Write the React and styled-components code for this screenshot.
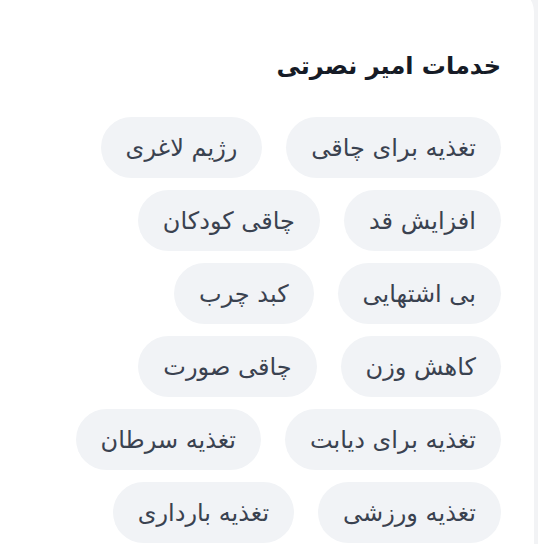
import React from 'react';
import styled, { createGlobalStyle } from 'styled-components';

const GlobalStyle = createGlobalStyle`
  html, body {
    margin: 0;
    padding: 0;
    background: #f2f3f5;
  }
  body {
    font-family: "DejaVu Sans", "Noto Sans", sans-serif;
    width: 538px;
    height: 544px;
    overflow: hidden;
  }
`;

const services = [
  'تغذیه برای چاقی',
  'رژیم لاغری',
  'افزایش قد',
  'چاقی کودکان',
  'بی اشتهایی',
  'کبد چرب',
  'کاهش وزن',
  'چاقی صورت',
  'تغذیه برای دیابت',
  'تغذیه سرطان',
  'تغذیه ورزشی',
  'تغذیه بارداری',
];

export default function App() {
  return (
    <>
      <GlobalStyle />
      <Card dir="rtl">
        <Title>خدمات امیر نصرتی</Title>
        <TagList>
          {services.map((s) => (
            <Tag key={s}>{s}</Tag>
          ))}
        </TagList>
      </Card>
    </>
  );
}

const Card = styled.section`
  width: 534px;
  height: 580px;
  margin-top: -12px;
  box-sizing: border-box;
  background: #ffffff;
  border-top-right-radius: 24px;
  padding: 60px 33px 0 40px;
`;

const Title = styled.h2`
  margin: 0 0 33px;
  font-size: 24px;
  font-weight: 700;
  color: #161b26;
  line-height: 36px;
`;

const TagList = styled.div`
  display: flex;
  flex-wrap: wrap;
  gap: 12px 24px;
`;

const Tag = styled.span`
  display: inline-flex;
  align-items: center;
  height: 61px;
  padding: 0 25px;
  border-radius: 999px;
  background: #f1f3f6;
  color: #3a4250;
  font-size: 24px;
  white-space: nowrap;
`;
